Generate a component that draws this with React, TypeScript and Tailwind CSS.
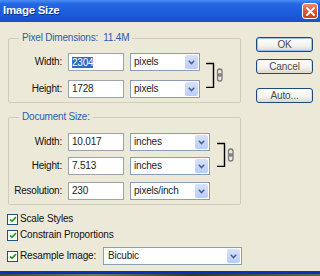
import React from "react";

const font = { fontFamily: '"Liberation Sans", Arial, sans-serif' };

function Chevron() {
  return (
    <svg width="7" height="5" viewBox="0 0 7 5">
      <path d="M0.8 0.8 L3.5 3.6 L6.2 0.8" fill="none" stroke="#4D6185" strokeWidth="1.5" />
    </svg>
  );
}

function Select({ value, w }: { value: string; w: string }) {
  return (
    <div className={`${w} h-[18px] bg-white border border-[#8a9db5] flex items-center justify-between pl-[3px] pr-[1px]`}>
      <span className="text-[10px] leading-none text-[#222] tracking-[-0.2px]">{value}</span>
      <div className="w-[13px] h-[14px] rounded-[2px] bg-[linear-gradient(180deg,#d6e2fb_0%,#b9cdf6_100%)] flex items-center justify-center">
        <Chevron />
      </div>
    </div>
  );
}

function Input({ value, selected }: { value: string; selected?: boolean }) {
  return (
    <div className="w-[56px] h-[18px] bg-white border border-[#9ba4ad] flex items-center pl-[3px]">
      {selected ? (
        <span className="text-[10px] leading-[11px] text-white bg-[#316AC5] tracking-[-0.2px]">{value}</span>
      ) : (
        <span className="text-[10px] leading-none text-[#222] tracking-[-0.2px]">{value}</span>
      )}
    </div>
  );
}

function Row({ label, value, unit, selW, selected, className = "" }: { label: string; value: string; unit: string; selW: string; selected?: boolean; className?: string }) {
  return (
    <div className={`flex items-center h-[18px] ${className}`}>
      <div className="w-[54px] text-right text-[10px] leading-none text-[#111] tracking-[-0.2px] pr-[1px] whitespace-nowrap">{label}</div>
      <div className="ml-[5px]">
        <Input value={value} selected={selected} />
      </div>
      <div className="ml-[6px]">
        <Select value={unit} w={selW} />
      </div>
    </div>
  );
}

function Link({ h }: { h: number }) {
  return (
    <svg width="20" height={h} viewBox={`0 0 20 ${h}`}>
      <path d={`M1 10.5 H8.5 V${h - 0.5} H1`} fill="none" stroke="#000" strokeWidth="1.4" />
      <rect x="12.5" y="16" width="4.5" height="7" rx="2.2" fill="none" stroke="#7a7a7a" strokeWidth="1.3" />
      <rect x="12.5" y="21" width="4.5" height="7" rx="2.2" fill="none" stroke="#7a7a7a" strokeWidth="1.3" />
    </svg>
  );
}

function Check({ label, className = "" }: { label: string; className?: string }) {
  return (
    <div className={`flex items-center h-[14px] ml-[-1px] shrink-0 ${className}`}>
      <div className="w-[11px] h-[11px] shrink-0 bg-white border border-[#1c5180] flex items-center justify-center">
        <svg width="8" height="7" viewBox="0 0 8 7">
          <path d="M1 3.3 L3 5.3 L7 1.2" fill="none" stroke="#21a121" strokeWidth="1.7" />
        </svg>
      </div>
      <span className="ml-[2px] text-[10px] leading-none text-[#111] tracking-[-0.15px] whitespace-nowrap">{label}</span>
    </div>
  );
}

function Button({ label, def, className = "" }: { label: string; def?: boolean; className?: string }) {
  return (
    <div
      className={`w-[57px] h-[15px] rounded-[3px] border border-[#1d4a7a] bg-[linear-gradient(180deg,#ffffff_0%,#f3f2ee_60%,#dcd8cc_100%)] flex items-center justify-center ${def ? "shadow-[inset_0_0_0_1px_#9cbdf0]" : "shadow-[inset_0_-1px_0_1px_#e0ddd2]"} ${className}`}
    >
      <span className="text-[10px] leading-none text-[#4a4a4a] tracking-[-0.1px]">{label}</span>
    </div>
  );
}

export default function App() {
  return (
    <div className="w-[320px] h-[276px] overflow-hidden flex flex-col" style={font}>
      {/* title bar */}
      <div className="h-[22px] shrink-0 flex items-center justify-between bg-[linear-gradient(180deg,#4a8ff5_0%,#2466e4_18%,#1b5cdc_60%,#1a54cf_90%,#1f4fb8_100%)]">
        <span className="ml-[3px] text-[11.5px] font-bold text-white tracking-[-0.3px] [text-shadow:1px_1px_0_#0b2f8a]">Image Size</span>
        <div className="mr-[2px] w-[16px] h-[16px] rounded-[3px] border border-white bg-[linear-gradient(180deg,#f08a6a_0%,#e05a35_45%,#c9401c_100%)] flex items-center justify-center">
          <svg width="9" height="9" viewBox="0 0 9 9">
            <path d="M1 1 L8 8 M8 1 L1 8" stroke="#fff" strokeWidth="1.8" strokeLinecap="round" />
          </svg>
        </div>
      </div>

      {/* content */}
      <div className="flex-1 bg-[#ECE9D8] flex">
        <div className="w-[242px] pl-[8px] pt-[16px] flex flex-col">
          {/* Pixel Dimensions */}
          <div className="relative w-[233px] h-[65px] border border-[#cfccbc] rounded-[2px] pt-[14px]">
            <span className="absolute top-[-7px] left-[10px] px-[3px] bg-[#ECE9D8] text-[10px] leading-[12px] text-[#2a5db0] tracking-[-0.2px] whitespace-pre">
              Pixel Dimensions:  11.4M
            </span>
            <div className="flex">
              <div className="flex flex-col">
                <Row label="Width:" value="2304" unit="pixels" selW="w-[70px]" selected />
                <Row label="Height:" value="1728" unit="pixels" selW="w-[70px]" className="mt-[9px]" />
              </div>
              <div className="ml-[5px]">
                <Link h={35} />
              </div>
            </div>
          </div>

          {/* Document Size */}
          <div className="relative mt-[14px] w-[233px] h-[88px] border border-[#cfccbc] rounded-[2px] pt-[15px]">
            <span className="absolute top-[-7px] left-[10px] px-[3px] bg-[#ECE9D8] text-[10px] leading-[12px] text-[#2a5db0] tracking-[-0.2px] whitespace-nowrap">
              Document Size:
            </span>
            <div className="flex">
              <div className="flex flex-col">
                <Row label="Width:" value="10.017" unit="inches" selW="w-[80px]" />
                <Row label="Height:" value="7.513" unit="inches" selW="w-[80px]" className="mt-[6px]" />
              </div>
              <div className="ml-[6px]">
                <Link h={34} />
              </div>
            </div>
            <Row label="Resolution:" value="230" unit="pixels/inch" selW="w-[80px]" className="mt-[7px]" />
          </div>

          <Check label="Scale Styles" className="mt-[7px]" />
          <Check label="Constrain Proportions" className="mt-[2px]" />
          <div className="mt-[5px] flex items-center h-[18px]">
            <Check label="Resample Image:" className="w-[96px]" />
            <div className="shrink-0">
              <div className="w-[139px] h-[18px] bg-white border border-[#8a9db5] flex items-center justify-between pl-[4px] pr-[1px]">
                <span className="text-[10px] leading-none text-[#222] tracking-[-0.2px]">Bicubic</span>
                <div className="w-[13px] h-[14px] rounded-[2px] bg-[linear-gradient(180deg,#d6e2fb_0%,#b9cdf6_100%)] flex items-center justify-center">
                  <Chevron />
                </div>
              </div>
            </div>
          </div>
        </div>

        <div className="ml-[14px] pt-[15px] flex flex-col">
          <Button label="OK" def />
          <Button label="Cancel" className="mt-[7px]" />
          <Button label="Auto..." className="mt-[14px]" />
        </div>
      </div>

      <div className="h-[3px] shrink-0 bg-[#0a2fb8]" />
      <div className="h-[2px] shrink-0 bg-[linear-gradient(90deg,#3d4a35,#6b7a5a_30%,#2f3a2a_60%,#586a4c)]" />
    </div>
  );
}
